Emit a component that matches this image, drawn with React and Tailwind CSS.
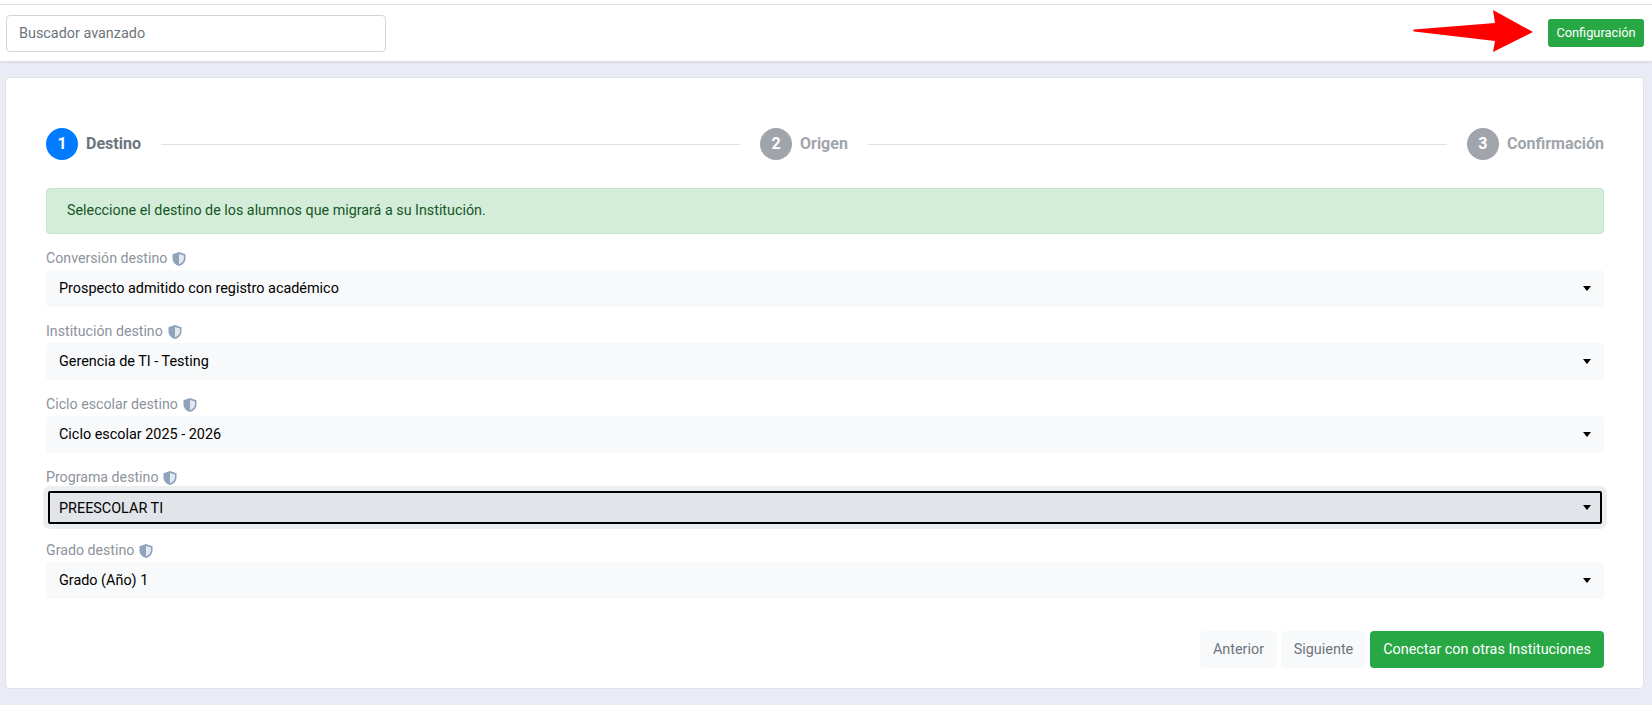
const fields = [
  { label: "Conversión destino", value: "Prospecto admitido con registro académico" },
  { label: "Institución destino", value: "Gerencia de TI - Testing" },
  { label: "Ciclo escolar destino", value: "Ciclo escolar 2025 - 2026" },
  { label: "Programa destino", value: "PREESCOLAR TI", focused: true },
  { label: "Grado destino", value: "Grado (Año) 1" },
];

function ShieldIcon() {
  return (
    <svg width="16" height="16" viewBox="0 0 16 16" className="ml-1 shrink-0">
      <path d="M8 1 L14.5 3.2 V7.5 C14.5 11.2 11.8 13.9 8 15 C4.2 13.9 1.5 11.2 1.5 7.5 V3.2 Z" fill="#8fa3bd" />
      <path d="M8 3 L12.9 4.6 V7.6 C12.9 10.2 10.7 12.4 8 13.3 Z" fill="#e4e9f0" />
    </svg>
  );
}

function Step({ n, label, active }) {
  return (
    <div className="flex items-center shrink-0">
      <div className={`w-8 h-8 rounded-full flex items-center justify-center text-white font-bold text-base ${active ? "bg-[#007bff]" : "bg-[#a0a5ab]"}`}>
        {n}
      </div>
      <span className={`ml-2 text-base font-bold ${active ? "text-[#6c757d]" : "text-[#a0a5ab]"}`}>{label}</span>
    </div>
  );
}

function Field({ label, value, focused }) {
  return (
    <div className="mb-[15px]">
      <div className="flex items-center h-[21px] pb-px text-[14.2px] text-[#8d939c]">
        {label}
        <ShieldIcon />
      </div>
      <div
        className={`relative h-[37px] rounded flex items-center pl-[13px] text-[14.4px] text-black ${
          focused
            ? "pt-[2px] bg-[#e1e4e8] outline-2 -outline-offset-4 outline-black shadow-[0_0_0_3px_#eceef0,inset_0_0_0_2px_#eceef0]"
            : "bg-[#f8f9fa]"
        }`}
      >
        {value}
        <span className="absolute right-[13px] top-[16px] w-0 h-0 border-x-4 border-x-transparent border-t-[5px] border-t-black" />
      </div>
    </div>
  );
}

export default function App() {
  return (
    <div className="h-[705px] overflow-hidden bg-[#e9ecf5] font-['Roboto',sans-serif]">
      <div className="relative h-[57px] bg-white border-t border-t-[#dee2e6] mt-1 shadow-[0_1px_4px_rgba(0,0,0,0.1)] flex items-start justify-between pt-[10px] pl-[6px] pr-2 before:absolute before:left-0 before:right-0 before:-top-[5px] before:h-1 before:bg-white">
        <div className="w-[380px] h-[37px] border border-[#ced4da] rounded flex items-center pl-3 text-[14.4px] text-[#6c757d] bg-white">
          Buscador avanzado
        </div>
        <button className="mt-1 w-24 h-7 rounded-[3px] bg-[#28a745] text-white text-[12.8px]">Configuración</button>
        <svg width="122" height="44" viewBox="0 0 122 44" className="absolute left-[1412px] top-[5px]">
          <polygon points="81,0 83,13 2,19.5 1,20.5 2,21.5 83,31 81,42 121,22" fill="#ff0000" />
        </svg>
      </div>

      <div className="mt-4 ml-[5px] mr-2 h-[612px] bg-white border border-[#dee2e6] rounded pt-[50px] pl-10 pr-[39px]">
        <div className="flex items-center">
          <Step n="1" label="Destino" active />
          <div className="flex-1 h-px bg-[#dee2e6] mx-5" />
          <Step n="2" label="Origen" />
          <div className="flex-1 h-px bg-[#dee2e6] mx-5" />
          <Step n="3" label="Confirmación" />
        </div>

        <div className="mt-7 mb-[15px] h-[46px] rounded bg-[#d4edda] border border-[#c3e6cb] flex items-center px-5 text-[14.3px] text-[#155724]">
          Seleccione el destino de los alumnos que migrará a su Institución.
        </div>

        {fields.map((f) => (
          <Field key={f.label} {...f} />
        ))}

        <div className="mt-8 flex justify-end gap-1 text-[14.4px]">
          <button className="w-[77px] h-[37px] rounded bg-[#f8f9fa] text-[#6c757d]">Anterior</button>
          <button className="w-[85px] h-[37px] rounded bg-[#f8f9fa] text-[#6c757d]">Siguiente</button>
          <button className="w-[234px] h-[37px] rounded bg-[#28a745] text-white">Conectar con otras Instituciones</button>
        </div>
      </div>
    </div>
  );
}
